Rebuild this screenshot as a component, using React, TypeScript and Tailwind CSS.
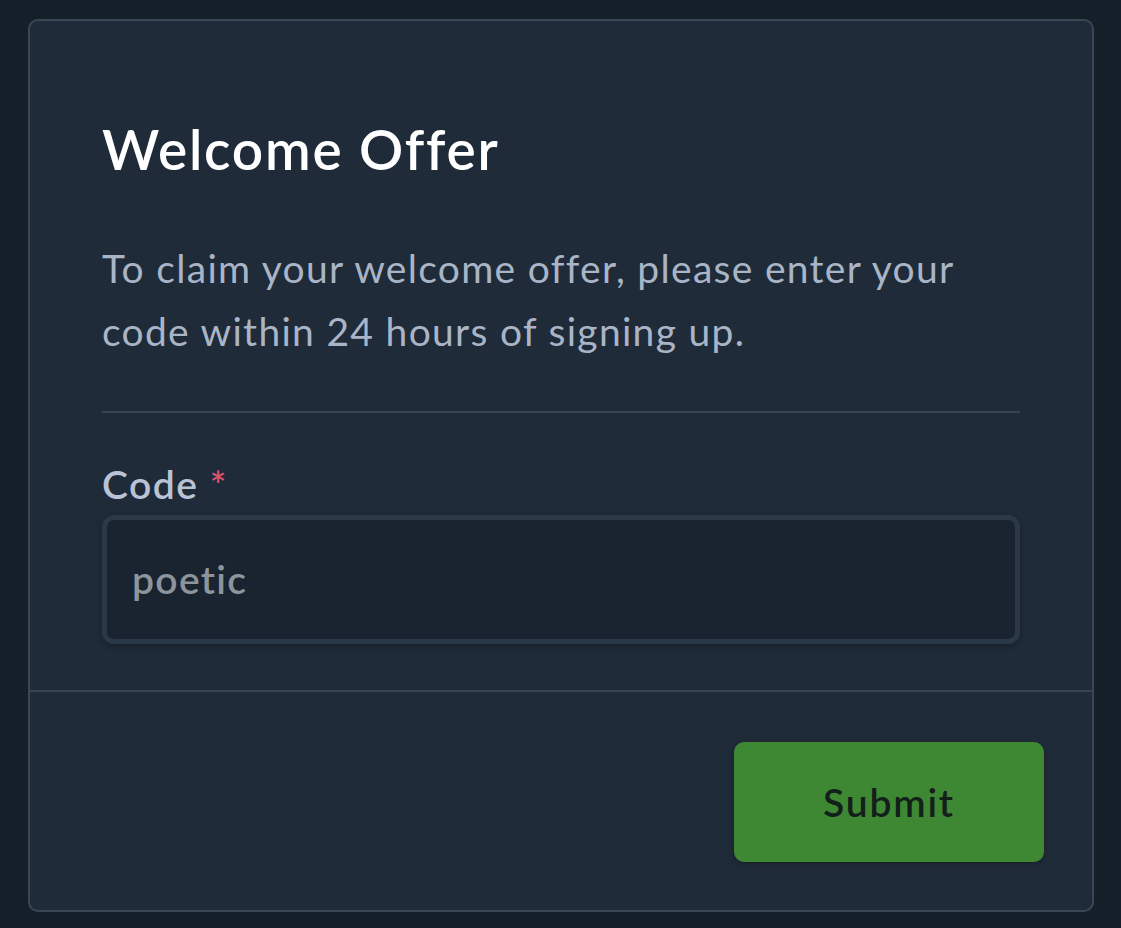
export default function App() {
  return (
    <div
      className="min-h-screen bg-[#151f2a] pt-[19px] pl-[28px] pr-[27px] pb-[17px]"
      style={{ fontFamily: "Lato, 'Open Sans', sans-serif" }}
    >
      <div className="w-[1066px] rounded-[10px] border-2 border-[#394755] bg-[#1f2b38]">
        <div className="px-[72px] pt-[96px] pb-[46px]">
          <h1 className="text-[55px] leading-[64px] font-semibold tracking-[1.8px] text-white">
            Welcome Offer
          </h1>
          <p className="mt-[56px] text-[39px] leading-[63px] tracking-[1.3px] text-[#a9b5c7]">
            To claim your welcome offer, please enter your code within 24 hours
            of signing up.
          </p>
          <div className="mt-[48px] h-[2px] bg-[#374452]" />
          <label className="mt-[47px] block text-[39px] leading-[48px] font-semibold tracking-[1.5px] text-[#bac3d6]">
            Code <span className="text-[#d9546d]">*</span>
          </label>
          <div className="mt-[7px] h-[129px] rounded-[12px] border-[5px] border-[#2a3847] bg-[#1a2430] flex items-center px-[25px] shadow-[0_2px_6px_rgba(0,0,0,0.25)]">
            <span className="text-[39px] font-semibold tracking-[1.3px] text-[#8d949b]">poetic</span>
          </div>
        </div>
        <div className="h-[2px] bg-[#374452]" />
        <div className="flex justify-end px-[48px] pt-[50px] pb-[48px]">
          <button className="w-[310px] h-[120px] rounded-[10px] bg-[#3f8833] text-[39px] font-semibold tracking-[1.8px] text-[#13201a] shadow-[0_2px_6px_rgba(0,0,0,0.25)]">
            Submit
          </button>
        </div>
      </div>
    </div>
  );
}
